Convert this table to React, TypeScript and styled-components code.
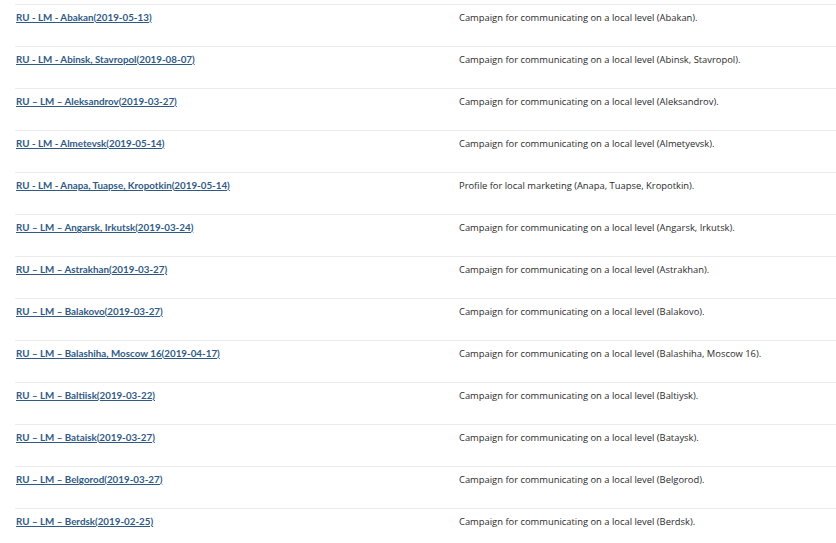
import styled, { createGlobalStyle } from "styled-components";

const rows: [string, string][] = [
  ["RU - LM - Abakan(2019-05-13)", "Campaign for communicating on a local level (Abakan)."],
  ["RU - LM - Abinsk, Stavropol(2019-08-07)", "Campaign for communicating on a local level (Abinsk, Stavropol)."],
  ["RU – LM – Aleksandrov(2019-03-27)", "Campaign for communicating on a local level (Aleksandrov)."],
  ["RU - LM - Almetevsk(2019-05-14)", "Campaign for communicating on a local level (Almetyevsk)."],
  ["RU - LM - Anapa, Tuapse, Kropotkin(2019-05-14)", "Profile for local marketing (Anapa, Tuapse, Kropotkin)."],
  ["RU – LM – Angarsk, Irkutsk(2019-03-24)", "Campaign for communicating on a local level (Angarsk, Irkutsk)."],
  ["RU – LM – Astrakhan(2019-03-27)", "Campaign for communicating on a local level (Astrakhan)."],
  ["RU – LM – Balakovo(2019-03-27)", "Campaign for communicating on a local level (Balakovo)."],
  ["RU – LM – Balashiha, Moscow 16(2019-04-17)", "Campaign for communicating on a local level (Balashiha, Moscow 16)."],
  ["RU – LM – Baltiisk(2019-03-22)", "Campaign for communicating on a local level (Baltiysk)."],
  ["RU – LM – Bataisk(2019-03-27)", "Campaign for communicating on a local level (Bataysk)."],
  ["RU – LM – Belgorod(2019-03-27)", "Campaign for communicating on a local level (Belgorod)."],
  ["RU – LM – Berdsk(2019-02-25)", "Campaign for communicating on a local level (Berdsk)."],
];

const GlobalStyle = createGlobalStyle`
  body {
    margin: 0;
    background: #fff;
    font-family: "Open Sans", sans-serif;
  }
`;

const Table = styled.div`
  margin-left: 15px;
  padding-top: 4px;
`;

const Row = styled.div`
  display: grid;
  grid-template-columns: 444px 1fr;
  height: 42px;
  box-sizing: border-box;
  border-top: 1px solid #ececec;
  padding-top: 5px;
  align-items: start;
`;

const NameCell = styled.div`
  display: flex;
  align-items: flex-start;
`;

const Name = styled.a`
  padding-left: 1px;
  font-family: Lato, "Open Sans", sans-serif;
  font-weight: 700;
  font-size: 9.8px;
  line-height: 15px;
  color: #2f5a86;
  text-decoration: underline;
`;

const Description = styled.div`
  font-size: 9.4px;
  line-height: 15px;
  color: #2b2b2b;
`;

export default function App() {
  return (
    <>
      <GlobalStyle />
      <Table>
        {rows.map(([name, desc]) => (
          <Row key={name}>
            <NameCell>
              <Name href="#">{name}</Name>
            </NameCell>
            <Description>{desc}</Description>
          </Row>
        ))}
      </Table>
    </>
  );
}
